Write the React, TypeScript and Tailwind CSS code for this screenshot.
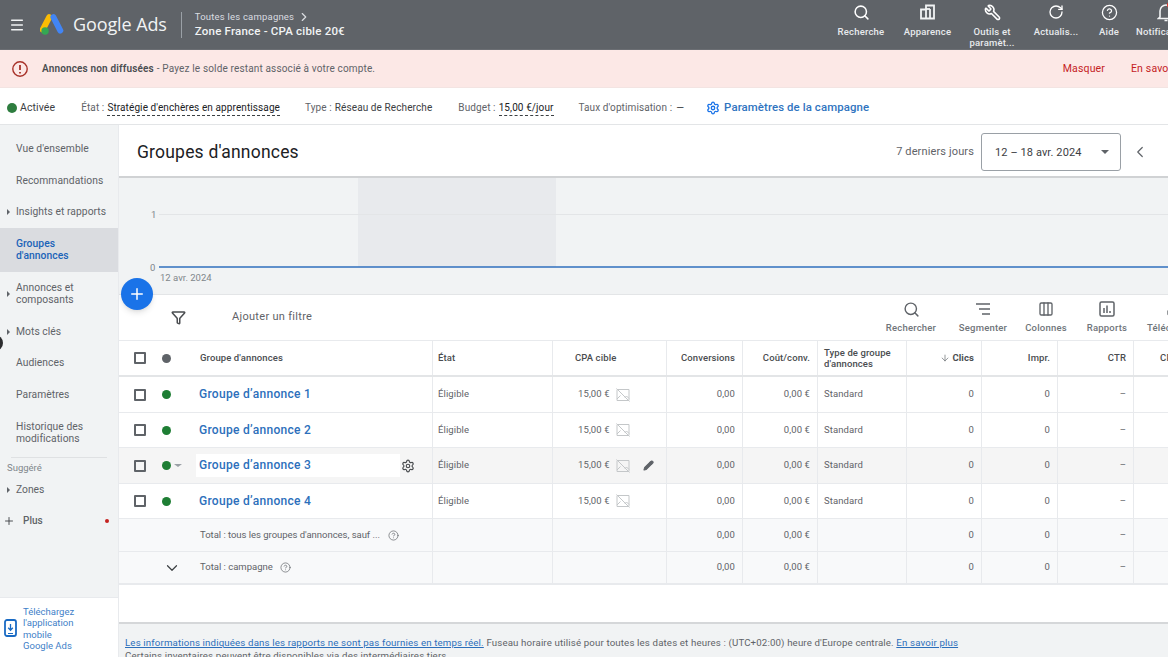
import { ArrowDown, ChevronDown, ChevronLeft, ChevronRight, CircleHelp, Columns3, Download, Filter, Menu, Pencil, Plus, RotateCw, Search, Settings, Wrench } from 'lucide-react';

const navItems = [
  { label: "Vue d'ensemble" },
  { label: 'Recommandations' },
  { label: 'Insights et rapports', arrow: true },
  { label: "Groupes\nd'annonces", active: true },
  { label: 'Annonces et\ncomposants', arrow: true },
  { label: 'Mots clés', arrow: true },
  { label: 'Audiences' },
  { label: 'Paramètres' },
  { label: 'Historique des\nmodifications' },
];

const rows = [
  { name: "Groupe d’annonce 1", h: 'h-[36px]' },
  { name: "Groupe d’annonce 2", h: 'h-[35px]' },
  { name: "Groupe d’annonce 3", h: 'h-[36px]', hover: true },
  { name: "Groupe d’annonce 4", h: 'h-[35px]' },
];

function TopAction({ icon, label, w }: { icon: React.ReactNode; label: string; w: string }) {
  return (
    <div className={`flex shrink-0 flex-col items-center pt-[2px] text-center ${w}`}>
      <div className="flex h-[20px] items-center justify-center">{icon}</div>
      <div className="mt-[4px] text-[9.5px] leading-[11px] font-medium tracking-[0.2px] text-[#e8eaed]">{label}</div>
    </div>
  );
}

function ToolAction({ icon, label, w }: { icon: React.ReactNode; label: string; w: string }) {
  return (
    <div className={`flex shrink-0 flex-col items-center ${w}`}>
      <div className="flex h-[20px] items-center justify-center">{icon}</div>
      <div className="mt-[2px] text-[9.5px] font-medium tracking-[0.2px] whitespace-nowrap text-[#70757a]">{label}</div>
    </div>
  );
}

function Checkbox() {
  return <div className="h-[12px] w-[12px] rounded-[1px] border-2 border-[#5f6368]" />;
}

function NoImageIcon() {
  return (
    <svg width="14" height="14" viewBox="0 0 14 14" fill="none" stroke="#c4c7c9" strokeWidth="1">
      <path d="M1 1.5h12v11H1z" />
      <path d="M0.5 0.5l13 13M1 11l3.5-3.5M9 9.5l1.5-1.5 2.5 2.5" />
    </svg>
  );
}

function Cell({ w, right, children, className = '' }: { w: string; right?: boolean; children?: React.ReactNode; className?: string }) {
  return (
    <div className={`flex h-full shrink-0 items-center border-r border-[#e8eaed] px-[7px] ${w} ${right ? 'justify-end' : ''} ${className}`}>
      {children}
    </div>
  );
}

function MetricCells({ cost, conv, type }: { cost: string; conv: string; type?: string }) {
  return (
    <>
      <Cell w="w-[76px]" right>{conv}</Cell>
      <Cell w="w-[75px]" right>{cost}</Cell>
      <Cell w="w-[89px]" className="pl-[6px]">{type}</Cell>
      <Cell w="w-[75px]" right>0</Cell>
      <Cell w="w-[76px]" right>0</Cell>
      <Cell w="w-[76px]" right>–</Cell>
      <Cell w="w-[76px]" right />
    </>
  );
}

export default function App() {
  return (
    <div className="flex h-[657px] w-[1168px] flex-col overflow-hidden bg-white font-['Roboto',sans-serif] text-[#3c4043]">
      {/* Top bar */}
      <div className="flex h-[50px] shrink-0 items-center overflow-hidden border-b border-[#6b6e73] bg-[#5f6368] pl-[9px] text-white">
        <Menu size={16} strokeWidth={2.2} className="text-[#f1f3f4]" />
        <svg width="24" height="24" viewBox="0 0 26 26" className="ml-[15px]">
          <path d="M10 4.5L3 18" stroke="#fbbc04" strokeWidth="6.5" strokeLinecap="round" />
          <path d="M14.5 4.5L22 19" stroke="#4285f4" strokeWidth="6.5" strokeLinecap="round" />
          <circle cx="5.5" cy="19.5" r="4" fill="#34a853" />
        </svg>
        <span className="ml-[9px] font-['Open_Sans',sans-serif] text-[18px] tracking-[-0.1px] text-[#f1f3f4]">Google Ads</span>
        <div className="ml-[14px] h-[26px] w-px bg-[#9aa0a6]" />
        <div className="ml-[13px] flex flex-col">
          <div className="flex items-center text-[9.5px] leading-[14px] tracking-[0.2px] text-[#dadce0]">
            Toutes les campagnes <ChevronRight size={14} className="ml-[3px]" />
          </div>
          <div className="text-[11.5px] leading-[15px] font-medium tracking-[0.2px] text-[#f1f3f4]">Zone France - CPA cible 20€</div>
        </div>
        <div className="ml-auto flex h-full shrink-0 items-start">
          <TopAction w="w-[66px]" label="Recherche" icon={<Search size={17} strokeWidth={2.2} />} />
          <TopAction
            w="w-[67px]"
            label="Apparence"
            icon={
              <svg width="18" height="18" viewBox="0 0 18 18" fill="none" stroke="#f1f3f4" strokeWidth="1.8">
                <path d="M7 2.5h8v13H2v-9h5zM7 6.5v9M11 6v9.5" />
                <path d="M11 6h-4" />
              </svg>
            }
          />
          <TopAction w="w-[62px]" label="Outils et paramèt..." icon={<Wrench size={17} strokeWidth={2.2} className="-scale-x-100" />} />
          <TopAction w="w-[66px]" label="Actualis..." icon={<RotateCw size={16} strokeWidth={2} />} />
          <TopAction w="w-[40px]" label="Aide" icon={<CircleHelp size={17} strokeWidth={1.8} />} />
          <div className="flex w-[39px] shrink-0 flex-col items-start overflow-hidden pt-[2px] pl-[7px]">
            <svg width="18" height="20" viewBox="0 0 18 20" fill="none" stroke="#f1f3f4" strokeWidth="1.6" className="ml-[21px] shrink-0">
              <path d="M3 15V9a6 6 0 0 1 12 0v6l1.5 1.5h-15zM7.5 18.5h3" />
              <circle cx="13" cy="3" r="3" fill="#d93025" stroke="none" />
            </svg>
            <div className="mt-[4px] text-[9.5px] leading-[11px] font-medium tracking-[0.2px] whitespace-nowrap text-[#e8eaed]">Notifications</div>
          </div>
        </div>
      </div>

      {/* Alert banner */}
      <div className="flex h-[38px] shrink-0 items-center border-b border-[#f3e4e2] bg-[#fce8e6] pl-[11px] text-[10px] tracking-[0.15px] whitespace-nowrap">
        <svg width="18" height="18" viewBox="0 0 18 18" fill="none" stroke="#a8322a" strokeWidth="1.4">
          <circle cx="9" cy="9" r="7.2" />
          <path d="M9 5v5M9 12v1.4" strokeWidth="1.8" />
        </svg>
        <span className="ml-[13px] font-semibold text-[#4a4d50]">Annonces non diffusées</span>
        <span className="ml-[3px] text-[#5f6368]">- Payez le solde restant associé à votre compte.</span>
        <span className="ml-auto text-[10.5px] text-[#c5221f]">Masquer</span>
        <span className="ml-[26px] w-[37px] overflow-hidden text-[10.5px] text-[#c5221f]">En savoir</span>
      </div>

      {/* Campaign status */}
      <div className="flex h-[37px] shrink-0 items-center border-b border-[#e3e5e7] pt-[3px] pl-[7px] text-[10px] tracking-[0.1px] whitespace-nowrap text-[#5f6368]">
        <div className="h-[10px] w-[10px] rounded-full bg-[#2e7d3f]" />
        <span className="ml-[3px] text-[10.5px] text-[#3c4043]">Activée</span>
        <span className="ml-[26px]">État :</span>
        <span className="ml-[3px] border-b border-dashed border-[#3c4043] text-[#202124]">Stratégie d'enchères en apprentissage</span>
        <span className="ml-[25px]">Type :</span>
        <span className="ml-[3px] text-[#3c4043]">Réseau de Recherche</span>
        <span className="ml-[26px]">Budget :</span>
        <span className="ml-[3px] border-b border-dashed border-[#3c4043] text-[#202124]">15,00 €/jour</span>
        <span className="ml-[25px]">Taux d'optimisation :</span>
        <span className="ml-[4px] text-[#3c4043]">—</span>
        <Settings size={14} strokeWidth={2.2} className="ml-[22px] text-[#1a73e8]" />
        <span className="ml-[4px] text-[11.4px] font-medium text-[#2f74c0]">Paramètres de la campagne</span>
      </div>

      <div className="flex min-h-0 flex-1">
        {/* Sidebar */}
        <aside className="relative flex w-[118px] shrink-0 flex-col bg-[#f1f3f4]">
          <div className="flex-1 pt-[8.5px]">
            {navItems.map((item) => (
              <div
                key={item.label}
                className={`relative flex items-center pl-[16px] text-[10.3px] leading-[12.5px] tracking-[0.05px] whitespace-pre-line ${
                  item.label.includes('\n') ? 'h-[44px]' : 'h-[31.6px]'
                } ${item.active ? 'bg-[#dadce0] font-medium text-[#1a63b8]' : 'text-[#5f6368]'}`}
              >
                {item.arrow && <div className="absolute left-[7px] h-0 w-0 border-y-[3px] border-l-[3px] border-y-transparent border-l-[#5f6368]" />}
                {item.label}
              </div>
            ))}
            <div className="mx-[11px] mt-[1.5px] border-t border-[#dfe1e3]" />
            <div className="mt-[4px] pl-[7px] text-[9.5px] leading-[12px] text-[#80868b]">Suggéré</div>
            <div className="relative mt-[6px] flex h-[20px] items-center pl-[16px] text-[10.3px] text-[#5f6368]">
              <div className="absolute left-[7px] h-0 w-0 border-y-[3px] border-l-[3px] border-y-transparent border-l-[#5f6368]" />
              Zones
            </div>
            <div className="mt-[11px] flex h-[20px] items-center pl-[3px] text-[10px] font-medium text-[#5f6368]">
              <Plus size={12} strokeWidth={1.8} className="text-[#3c4043]" />
              <span className="ml-[8px]">Plus</span>
              <div className="mr-[9px] ml-auto h-[4px] w-[4px] rounded-full bg-[#c5221f]" />
            </div>
          </div>
          <div className="flex h-[60px] shrink-0 items-center border-t border-[#e8eaed] bg-white pl-[4px]">
            <svg width="13" height="18" viewBox="0 0 13 18" className="shrink-0">
              <rect x="1" y="1" width="11" height="16" rx="2" fill="none" stroke="#1a6bc4" strokeWidth="1.8" />
              <path d="M6.5 5v6M4.2 8.8l2.3 2.4 2.3-2.4" fill="none" stroke="#1a6bc4" strokeWidth="1.3" />
              <path d="M4 14.5h5" stroke="#1a6bc4" strokeWidth="1" />
            </svg>
            <div className="mt-[2px] ml-[6px] text-[9.5px] leading-[11.3px] text-[#3f7fc8]">
              Téléchargez
              <br />
              l'application
              <br />
              mobile
              <br />
              Google Ads
            </div>
          </div>
          <div className="absolute top-[210px] -left-[13px] h-[16px] w-[16px] rounded-full bg-[#2b2c2e]" />
        </aside>

        {/* Main */}
        <main className="relative flex min-w-0 flex-1 flex-col overflow-hidden border-l border-[#e8eaed]">
          <div className="flex h-[53px] shrink-0 items-center border-b-2 border-[#d0d2d4] pt-[2px] pl-[18px] whitespace-nowrap">
            <h1 className="mt-[1px] text-[17.5px] font-normal tracking-[0.2px] text-[#202124]">Groupes d'annonces</h1>
            <span className="mt-[2px] ml-auto text-[11px] tracking-[0.13px] text-[#5f6368]">7 derniers jours</span>
            <div className="ml-[7px] flex h-[38px] w-[140px] items-center rounded-[3px] border border-[#9aa0a6] pl-[13px] text-[11px] tracking-[0.1px] text-[#3c4043]">
              <span className="mt-[3px]">12 – 18 avr. 2024</span>
              <div className="mr-[11px] ml-auto h-0 w-0 border-x-[4px] border-t-[4px] border-x-transparent border-t-[#5f6368]" />
            </div>
            <ChevronLeft size={18} strokeWidth={1.6} className="mr-[19px] ml-[10px] text-[#5f6368]" />
          </div>

          {/* Chart */}
          <div className="relative h-[117px] shrink-0 border-b border-[#e3e5e7] bg-[#f1f3f4]">
            <svg width="1050" height="117" className="absolute inset-0">
              <rect x="239" y="0" width="198" height="89" fill="#e8eaed" />
              <path d="M40 36.5H1050" stroke="#e3e5e7" strokeWidth="1" />
              <path d="M40 89H1050" stroke="#2f6fbe" strokeWidth="1.6" />
            </svg>
            <span className="absolute top-[30px] left-[32px] text-[9.5px] text-[#80868b]">1</span>
            <span className="absolute top-[83px] left-[31px] text-[9.5px] text-[#80868b]">0</span>
            <span className="absolute top-[93px] left-[41px] text-[9.5px] text-[#80868b]">12 avr. 2024</span>
          </div>

          {/* Toolbar */}
          <div className="flex h-[46px] shrink-0 items-center overflow-hidden border-b border-[#e8eaed] pl-[52px]">
            <Filter size={15} strokeWidth={2.4} className="text-[#4a4d50]" />
            <span className="ml-[46px] text-[11px] tracking-[0.3px] text-[#5f6368]">Ajouter un filtre</span>
            <div className="ml-auto flex shrink-0">
              <ToolAction w="w-[62px] mr-[10px]" label="Rechercher" icon={<Search size={17} strokeWidth={2} className="text-[#5f6368]" />} />
              <ToolAction
                w="w-[62px] mr-[1px]"
                label="Segmenter"
                icon={
                  <svg width="16" height="12" viewBox="0 0 16 12" fill="none" stroke="#5f6368" strokeWidth="1.6">
                    <path d="M1 1h14M4 6h11M7 11h8" />
                  </svg>
                }
              />
              <ToolAction w="w-[62px]" label="Colonnes" icon={<Columns3 size={16} strokeWidth={2} className="text-[#5f6368]" />} />
              <ToolAction
                w="w-[60px]"
                label="Rapports"
                icon={
                  <svg width="16" height="16" viewBox="0 0 16 16" fill="none" stroke="#5f6368" strokeWidth="1.5">
                    <rect x="1" y="1" width="14" height="14" rx="1.5" />
                    <path d="M5 12V7M8 12V4.5M11 12v-2" />
                  </svg>
                }
              />
              <div className="flex w-[31px] shrink-0 flex-col overflow-hidden pl-[10px]">
                <div className="flex h-[20px] items-center">
                  <Download size={16} strokeWidth={2} className="ml-[19px] shrink-0 text-[#5f6368]" />
                </div>
                <div className="mt-[2px] text-[9.5px] font-medium tracking-[0.2px] whitespace-nowrap text-[#70757a]">Télécharger</div>
              </div>
            </div>
          </div>

          {/* Table */}
          <div className="shrink-0 text-[9.5px] tracking-[0.1px] whitespace-nowrap">
            <div className="flex h-[36px] items-center border-b-2 border-[#e3e5e7] font-medium text-[#4a4d50]">
              <div className="flex h-full w-[314px] shrink-0 items-center border-r border-[#e8eaed] pl-[15px]">
                <Checkbox />
                <div className="ml-[16px] h-[9px] w-[9px] rounded-full bg-[#5f6368]" />
                <span className="ml-[29px]">Groupe d'annonces</span>
              </div>
              <Cell w="w-[120px]" className="pl-[5px]">État</Cell>
              <Cell w="w-[114px]" className="pl-[22px]">CPA cible</Cell>
              <Cell w="w-[76px]" right>Conversions</Cell>
              <Cell w="w-[75px]" right>Coût/conv.</Cell>
              <Cell w="w-[89px]" className="pl-[6px] leading-[11px] whitespace-normal">Type de groupe d'annonces</Cell>
              <Cell w="w-[75px]" right>
                <ArrowDown size={10} strokeWidth={1.6} className="mr-[2px] text-[#5f6368]" />
                <span className="font-bold">Clics</span>
              </Cell>
              <Cell w="w-[76px]" right>Impr.</Cell>
              <Cell w="w-[76px]" right>CTR</Cell>
              <Cell w="w-[76px]" right>CPC moy.</Cell>
            </div>
            {rows.map((row) => (
              <div key={row.name} className={`flex items-center border-b border-[#e8eaed] text-[#5f6368] ${row.h} ${row.hover ? 'bg-[#f5f5f5] text-[#3c4043]' : ''}`}>
                <div className="flex h-full w-[314px] shrink-0 items-center border-r border-[#e8eaed] pl-[15px]">
                  <Checkbox />
                  <div className="ml-[16px] h-[9px] w-[9px] rounded-full bg-[#1e7e34]" />
                  {row.hover ? (
                    <div className="ml-[3px] h-0 w-0 border-x-[4px] border-t-[3px] border-x-transparent border-t-[#9aa0a6]" />
                  ) : (
                    <div className="ml-[3px] w-[8px]" />
                  )}
                  <div className={`ml-[14px] flex h-[23px] w-[204px] items-center pl-[3px] ${row.hover ? 'bg-white' : ''}`}>
                    <span className="mb-[1px] text-[12px] font-medium tracking-[0.3px] text-[#2c6fbb]">{row.name}</span>
                  </div>
                  {row.hover && <Settings size={14} strokeWidth={2} className="ml-px text-[#4a4d50]" />}
                </div>
                <Cell w="w-[120px]" className="pl-[5px]">Éligible</Cell>
                <Cell w="w-[114px]" className="pl-[25px]">
                  15,00 €
                  <span className="ml-[6px]"><NoImageIcon /></span>
                  {row.hover && <Pencil size={11} strokeWidth={2.2} fill="#5f6368" className="ml-[13px] text-[#5f6368]" />}
                </Cell>
                <MetricCells conv="0,00" cost="0,00 €" type="Standard" />
              </div>
            ))}
            <div className="flex h-[33px] items-center border-b border-[#e8eaed] bg-[#f8f9fa] text-[#5f6368]">
              <div className="flex h-full w-[314px] shrink-0 items-center border-r border-[#e8eaed] pl-[81px] tracking-[-0.03px]">
                Total : tous les groupes d'annonces, sauf ...
                <CircleHelp size={11} strokeWidth={1.5} className="ml-[8px]" />
              </div>
              <Cell w="w-[120px]" />
              <Cell w="w-[114px]" />
              <MetricCells conv="0,00" cost="0,00 €" />
            </div>
            <div className="flex h-[33px] items-center border-b-2 border-[#e8eaed] bg-[#f8f9fa] text-[#5f6368]">
              <div className="flex h-full w-[314px] shrink-0 items-center border-r border-[#e8eaed] pl-[44px] tracking-[0px]">
                <ChevronDown size={18} strokeWidth={1.6} className="text-[#3c4043]" />
                <span className="ml-[19px]">Total : campagne</span>
                <CircleHelp size={11} strokeWidth={1.5} className="ml-[7px]" />
              </div>
              <Cell w="w-[120px]" />
              <Cell w="w-[114px]" />
              <MetricCells conv="0,00" cost="0,00 €" />
            </div>
          </div>

          <div className="flex-1" />

          {/* Footer note */}
          <div className="h-[35px] shrink-0 overflow-hidden border-t-2 border-[#d5d7d9] bg-[#f1f3f4] pt-[12px] pl-[6px] text-[9.7px] leading-[13px] tracking-[0.14px] whitespace-nowrap text-[#5f6368]">
            <div>
              <span className="text-[#2c6fbb] underline">Les informations indiquées dans les rapports ne sont pas fournies en temps réel.</span>{' '}
              Fuseau horaire utilisé pour toutes les dates et heures : (UTC+02:00) heure d'Europe centrale.{' '}
              <span className="text-[#2c6fbb] underline">En savoir plus</span>
            </div>
            <div>Certains inventaires peuvent être disponibles via des intermédiaires tiers.</div>
          </div>

          {/* Add button */}
          <div className="absolute top-[153px] left-[2px] flex h-[32px] w-[32px] items-center justify-center rounded-full bg-[#1a73e8] shadow-md">
            <Plus size={18} strokeWidth={2} className="text-white" />
          </div>
        </main>
      </div>
    </div>
  );
}
